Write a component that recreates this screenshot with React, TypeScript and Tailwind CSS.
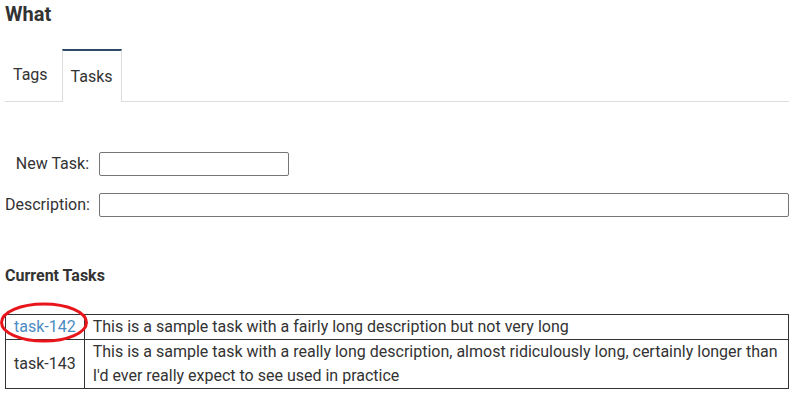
export default function App() {
  return (
    <div className="w-[796px] h-[403px] bg-white pl-[5px] text-[#333] font-['Roboto',sans-serif] text-[16px] leading-[24px] overflow-hidden">
      <div className="w-[784px]">
        {/* Title */}
        <h2 className="text-[20px] leading-[28px] font-bold text-[#333]">What</h2>

        {/* Tabs */}
        <div className="mt-[21px] flex border-b border-[#ddd] h-[53px]">
          <div className="px-[8px] flex items-center">Tags</div>
          <div className="ml-[6px] -mb-[1px] px-[8px] flex items-center border-t-2 border-t-[#2c4a66] border-x border-x-[#ddd] bg-white">
            Tasks
          </div>
        </div>

        {/* Form */}
        <div className="mt-[50px] flex flex-col gap-[17px]">
          <div className="flex items-center">
            <label className="w-[84px] text-right">New Task:</label>
            <input className="ml-[10px] w-[190px] h-[24px] border border-[#767676] rounded-[2px]" />
          </div>
          <div className="flex items-center">
            <label className="w-[84px] text-right">Description:</label>
            <input className="ml-[10px] flex-1 h-[24px] border border-[#767676] rounded-[2px]" />
          </div>
        </div>

        {/* Current tasks */}
        <h3 className="mt-[47px] text-[16px] leading-[24px] font-bold">Current Tasks</h3>

        <div className="relative mt-[26px]">
          <table className="w-full border-collapse border border-[#333]">
            <tbody>
              <tr>
                <td className="border border-[#333] px-[8px] align-middle whitespace-nowrap">
                  <a className="text-[#4a8bc2]">task-142</a>
                </td>
                <td className="border border-[#333] px-[8px]">
                  This is a sample task with a fairly long description but not very long
                </td>
              </tr>
              <tr>
                <td className="border border-[#333] px-[8px] align-middle whitespace-nowrap">task-143</td>
                <td className="border border-[#333] px-[8px]">
                  This is a sample task with a really long description, almost ridiculously long, certainly longer than I'd ever really expect to see used in practice
                </td>
              </tr>
            </tbody>
          </table>
          {/* red annotation ellipse */}
          <svg className="absolute left-[-5px] top-[-13px] pointer-events-none" width="96" height="44" viewBox="0 0 96 44">
            <ellipse cx="44" cy="21.5" rx="42.5" ry="18.5" fill="none" stroke="#e8161c" strokeWidth="3" />
          </svg>
        </div>
      </div>
    </div>
  );
}
